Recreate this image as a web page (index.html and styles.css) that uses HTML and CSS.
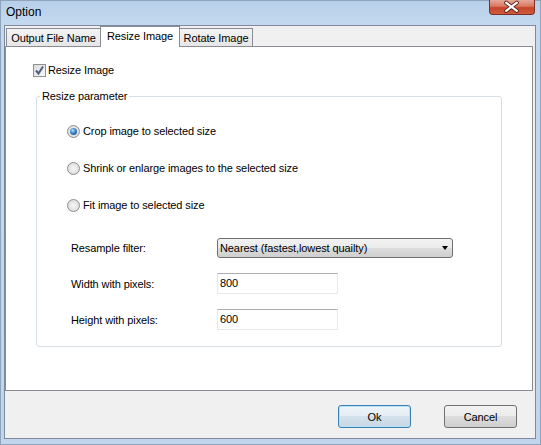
FILE: index.html
```html
<!DOCTYPE html>
<html lang="en">
<head>
<meta charset="utf-8">
<title>Option</title>
<link rel="stylesheet" href="styles.css">
</head>
<body>
<div class="window">
  <div class="titlebar">
    <span class="title">Option</span>
    <div class="close">
      <svg width="46" height="15" viewBox="0 0 46 15">
        <path d="M17.5 2.5 L28.5 11 M28.5 2.5 L17.5 11" stroke="#5a2218" stroke-width="4" stroke-linecap="round"/>
        <path d="M17.5 2.5 L28.5 11 M28.5 2.5 L17.5 11" stroke="#ffffff" stroke-width="2.2" stroke-linecap="round"/>
      </svg>
    </div>
  </div>
  <div class="client">
    <div class="tabs">
      <div class="tab tab-output">Output File Name</div>
      <div class="tab tab-active">Resize Image</div>
      <div class="tab tab-rotate">Rotate Image</div>
    </div>
    <div class="panel">
      <div class="check-row">
        <span class="checkbox">
          <svg width="11" height="11" viewBox="0 0 11 11">
            <path d="M2 5.5 L4.5 8.5 L9 1.5" fill="none" stroke="#4b5f86" stroke-width="2"/>
          </svg>
        </span>
        <span class="label">Resize Image</span>
      </div>
      <fieldset class="group">
        <legend>Resize parameter</legend>
        <div class="radios">
          <div class="radio-row"><span class="radio checked"><span class="dot"></span></span><span class="label">Crop image to selected size</span></div>
          <div class="radio-row"><span class="radio"></span><span class="label">Shrink or enlarge images to the selected size</span></div>
          <div class="radio-row"><span class="radio"></span><span class="label">Fit image to selected size</span></div>
        </div>
        <div class="form">
          <span class="flabel">Resample filter:</span>
          <div class="select"><span>Nearest (fastest,lowest quailty)</span><span class="arrow"></span></div>
          <span class="flabel">Width with pixels:</span>
          <div class="input">800</div>
          <span class="flabel">Height with pixels:</span>
          <div class="input">600</div>
        </div>
      </fieldset>
    </div>
    <div class="footer">
      <div class="btn btn-default">Ok</div>
      <div class="btn">Cancel</div>
    </div>
  </div>
</div>
</body>
</html>
```

FILE: styles.css
```css
html, body {
  margin: 0;
  padding: 0;
  background: #c3d8ee;
}

.window {
  box-sizing: border-box;
  width: 541px;
  height: 445px;
  border: 1px solid #8fa3bb;
  background: linear-gradient(to bottom, #b7cfe9 0px, #c4d9ef 24px, #c1d6ed 100%);
  display: flex;
  flex-direction: column;
  font-family: "Liberation Sans", Arial, sans-serif;
  font-size: 11px;
  letter-spacing: -0.1px;
  color: #000;
}

.titlebar {
  height: 24px;
  flex: none;
  display: flex;
  justify-content: space-between;
  align-items: flex-start;
}

.title {
  font-size: 12px;
  line-height: 14px;
  letter-spacing: 0;
  padding: 4px 0 0 5px;
}

.close {
  width: 46px;
  height: 15px;
  margin: -1px 5px 0 0;
  box-sizing: border-box;
  border: 1px solid #7a3024;
  border-top: none;
  border-radius: 0 0 4px 4px;
  background: linear-gradient(to bottom, #e7a898 0%, #d7775f 45%, #c4452b 55%, #cf5a3c 100%);
  display: flex;
  overflow: hidden;
}

.close svg {
  margin-left: -1px;
}

.client {
  flex: 1;
  margin: 0 4px 5px 3px;
  border: 1px solid #7b8a9c;
  background: #f0f0f0;
  display: flex;
  flex-direction: column;
}

.tabs {
  height: 20px;
  flex: none;
  display: flex;
  align-items: flex-end;
  padding-left: 1px;
}

.tab {
  box-sizing: border-box;
  height: 18px;
  border: 1px solid #898c95;
  border-bottom: none;
  background: linear-gradient(to bottom, #f3f3f3, #e6e6e6);
  text-align: center;
  line-height: 13px;
  padding-top: 3px;
}

.tab-output {
  width: 95px;
}

.tab-active {
  width: 80px;
  height: 21px;
  margin: 0 0 -1px -1px;
  background: #fff;
  position: relative;
  z-index: 1;
  padding-top: 3px;
}

.tab-rotate {
  width: 74px;
  margin-left: -1px;
}

.panel {
  flex: 1;
  margin-right: 2px;
  border: 1px solid #898c95;
  background: #fff;
  display: flex;
  flex-direction: column;
}

.label {
  line-height: 13px;
}

.check-row {
  display: flex;
  align-items: center;
  gap: 2px;
  padding: 17px 0 0 27px;
}

.checkbox {
  box-sizing: border-box;
  width: 13px;
  height: 13px;
  border: 1px solid #8e8f8f;
  background: linear-gradient(135deg, #dcdcdc, #f8f8f8);
  display: flex;
  align-items: center;
  justify-content: center;
}

.group {
  margin: 13px 30px 0 30px;
  padding: 0 0 16px 0;
  border: 1px solid #d5dfe5;
  border-radius: 3px;
  min-width: 0;
}

.group legend {
  margin-left: 3px;
  padding: 0 2px;
  line-height: 13px;
}

.radios {
  display: flex;
  flex-direction: column;
  gap: 24px;
  padding: 22px 0 0 30px;
}

.radio-row {
  display: flex;
  align-items: center;
  gap: 3px;
}

.radio {
  box-sizing: border-box;
  width: 13px;
  height: 13px;
  border-radius: 50%;
  border: 1px solid #8c8f92;
  background: radial-gradient(circle at 50% 50%, #f6f6f6 0%, #e6e6e6 50%, #d2d2d2 100%);
  display: flex;
  align-items: center;
  justify-content: center;
}

.radio .dot {
  width: 7px;
  height: 7px;
  border-radius: 50%;
  background: radial-gradient(circle at 40% 35%, #b9e1fb 0%, #3a86c6 45%, #0e3f78 100%);
}

.form {
  display: grid;
  grid-template-columns: 146px 236px;
  grid-template-rows: 20px 21px 21px;
  row-gap: 15px;
  align-items: center;
  padding: 26px 0 0 34px;
}

.select {
  box-sizing: border-box;
  height: 20px;
  border: 1px solid #707070;
  border-radius: 3px;
  background: linear-gradient(to bottom, #f2f2f2 0%, #ebebeb 50%, #dddddd 50%, #cfcfcf 100%);
  display: flex;
  align-items: center;
  justify-content: space-between;
  padding: 0 4px 0 2px;
}

.arrow {
  width: 0;
  height: 0;
  border-left: 3.5px solid transparent;
  border-right: 3.5px solid transparent;
  border-top: 4px solid #000;
}

.input {
  box-sizing: border-box;
  width: 121px;
  height: 21px;
  border: 1px solid #e3e9ef;
  border-top-color: #abadb3;
  background: #fff;
  line-height: 19px;
  padding-left: 2px;
}

.footer {
  height: 47px;
  flex: none;
  display: flex;
  justify-content: flex-end;
  align-items: flex-start;
  gap: 33px;
  padding: 14px 18px 0 0;
  box-sizing: border-box;
}

.btn {
  box-sizing: border-box;
  width: 73px;
  height: 23px;
  border: 1px solid #707070;
  border-radius: 3px;
  background: linear-gradient(to bottom, #f2f2f2 0%, #ebebeb 50%, #dddddd 50%, #cfcfcf 100%);
  display: flex;
  align-items: center;
  justify-content: center;
}

.btn-default {
  border-color: #3c7fb1;
  box-shadow: inset 0 0 0 1px #b7e1f8;
  background: linear-gradient(to bottom, #eef5f9 0%, #e3edf3 50%, #d4e2ec 50%, #c7d8e4 100%);
}
```
